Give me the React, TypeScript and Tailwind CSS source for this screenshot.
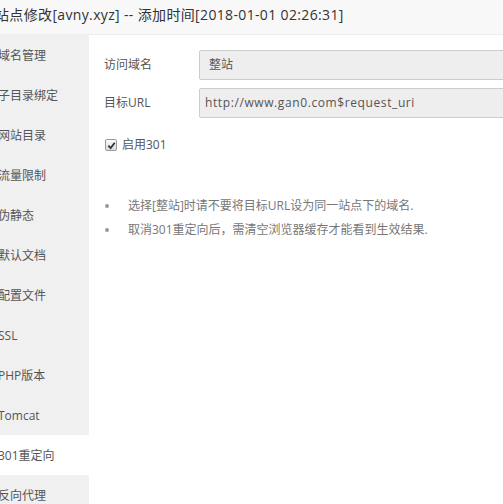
import React from 'react';

const menu = [
  '域名管理',
  '子目录绑定',
  '网站目录',
  '流量限制',
  '伪静态',
  '默认文档',
  '配置文件',
  'SSL',
  'PHP版本',
  'Tomcat',
  '301重定向',
  '反向代理',
];

const tips = [
  '选择[整站]时请不要将目标URL设为同一站点下的域名.',
  '取消301重定向后，需清空浏览器缓存才能看到生效结果.',
];

const font = { fontFamily: '"Open Sans", "Noto Sans CJK SC", "Liberation Sans", sans-serif' };

const App: React.FC = () => {
  return (
    <div className="w-[503px] h-[504px] overflow-hidden bg-white text-[#333]" style={font}>
      {/* title bar */}
      <div className="h-[35px] pb-[5px] bg-[#f8f8f8] border-b border-[#eee] flex items-center">
        <span className="-ml-[5px] text-[14px] tracking-[0.35px] whitespace-nowrap">
          站点修改[avny.xyz] -- 添加时间[2018-01-01 02:26:31]
        </span>
      </div>

      <div className="flex">
        {/* side menu */}
        <div className="w-[89px] shrink-0 bg-[#f0f0f0]">
          {menu.map((item) => (
            <p
              key={item}
              className={
                'h-[40px] leading-[41px] text-[12px] -indent-[2px] whitespace-nowrap text-[#555] ' +
                (item === '301重定向' ? 'bg-white' : '')
              }
            >
              {item}
            </p>
          ))}
        </div>

        {/* content */}
        <div className="flex-1 pl-[15px] pt-[15px]">
          <div className="flex items-center h-[30px]">
            <span className="w-[95px] text-[12px] text-[#555]">访问域名</span>
            <div className="w-[340px] h-[30px] shrink-0 rounded-[2px] border border-[#ccc] bg-[#eee] pl-[9px] flex items-center text-[12px] text-[#555]">
              整站
            </div>
          </div>
          <div className="flex items-center h-[30px] mt-[8px]">
            <span className="w-[95px] text-[12px] text-[#555]">目标URL</span>
            <div className="w-[340px] h-[30px] shrink-0 rounded-[2px] border border-[#ccc] bg-[#eee] pl-[5px] flex items-center text-[12px] tracking-[0.6px] text-[#555] whitespace-nowrap">
              http://www.gan0.com$request_uri
            </div>
          </div>

          <label className="flex items-center mt-[19px] h-[16px]">
            <span className="ml-[1px] w-[12px] h-[12px] rounded-[2px] border border-[#999] bg-gradient-to-b from-[#fbfbfb] to-[#dcdcdc] flex items-center justify-center">
              <svg width="9" height="9" viewBox="0 0 10 10">
                <path d="M1.5 5.2 L4 7.8 L8.6 2" fill="none" stroke="#333" strokeWidth="2" />
              </svg>
            </span>
            <span className="ml-[5px] text-[12px] text-[#555]">启用301</span>
          </label>

          <ul className="mt-[41px]">
            {tips.map((t) => (
              <li key={t} className="flex items-center h-[24px] text-[12px] text-[#777] whitespace-nowrap">
                <span className="w-[4px] h-[4px] rounded-full bg-[#999] ml-[1px] mr-[19px]" />
                {t}
              </li>
            ))}
          </ul>
        </div>
      </div>
    </div>
  );
};

export default App;
